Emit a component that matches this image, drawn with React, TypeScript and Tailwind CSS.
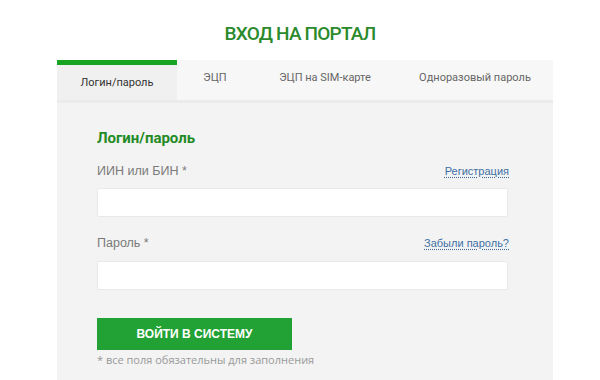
import React, { JSX } from "react";

const tabs = [
  { label: "Логин/пароль", width: "w-[120px]", active: true },
  { label: "ЭЦП", width: "w-[76px]", active: false },
  { label: "ЭЦП на SIM-карте", width: "w-[144px]", active: false },
  { label: "Одноразовый пароль", width: "w-[156px]", active: false },
];

function Field({ label, link }: { label: string; link?: string }): JSX.Element {
  return (
    <div className="flex items-end justify-between h-[16px]">
      <span className="text-[12.5px] leading-[16px] text-[#7a7a7a] font-['Liberation_Sans',sans-serif]">
        {label} *
      </span>
      {link && (
        <a
          href="#"
          className="text-[11px] leading-[16px] text-[#3d6fa3] underline decoration-dotted decoration-[#3d6fa3] underline-offset-2 font-['Liberation_Sans',sans-serif]"
        >
          {link}
        </a>
      )}
    </div>
  );
}

export default function App(): JSX.Element {
  return (
    <div className="w-[600px] h-[380px] bg-white overflow-hidden font-['Open_Sans',sans-serif]">
      <h1 className="pt-[20px] h-[60px] text-center text-[19px] leading-[28px] font-medium tracking-[-0.8px] text-[#2a8a2c] font-['Roboto',sans-serif]">
        ВХОД НА ПОРТАЛ
      </h1>

      <div className="ml-[57px] w-[496px]">
        <div className="flex font-['Roboto',sans-serif]">
          {tabs.map((tab) =>
            tab.active ? (
              <div
                key={tab.label}
                className={`${tab.width} h-[40px] border-t-[5px] border-[#18a323] bg-[#f0f0f0] flex items-center justify-center pt-[2px] text-[11px] text-[#333]`}
              >
                {tab.label}
              </div>
            ) : (
              <div
                key={tab.label}
                className={`${tab.width} h-[40px] bg-[#f7f7f7] flex items-center justify-center pb-[3px] text-[11px] text-[#666]`}
              >
                {tab.label}
              </div>
            )
          )}
        </div>
        <div className="h-[3px] bg-[#ebebeb]" />

        <div className="bg-[#f3f3f3] h-[300px] pl-[40px] pr-[44px] pt-[25px]">
          <h2 className="text-[15px] leading-[20px] font-bold text-[#238a25] font-['Roboto',sans-serif]">
            Логин/пароль
          </h2>

          <div className="mt-[15px]">
            <Field label="ИИН или БИН" link="Регистрация" />
          </div>
          <input
            type="text"
            className="mt-[9px] block w-[411px] h-[29px] bg-white border border-[#e9e9e9] rounded-[2px] outline-none"
          />

          <div className="mt-[18px]">
            <Field label="Пароль" link="Забыли пароль?" />
          </div>
          <input
            type="password"
            className="mt-[10px] block w-[411px] h-[29px] bg-white border border-[#e9e9e9] rounded-[2px] outline-none"
          />

          <button className="mt-[28px] w-[195px] h-[32px] bg-[#22a234] text-white text-[12px] font-bold font-['Liberation_Sans',sans-serif]">
            ВОЙТИ В СИСТЕМУ
          </button>
          <p className="mt-[3px] text-[11px] leading-[14px] text-[#999]">
            * все поля обязательны для заполнения
          </p>
        </div>
      </div>
    </div>
  );
}
